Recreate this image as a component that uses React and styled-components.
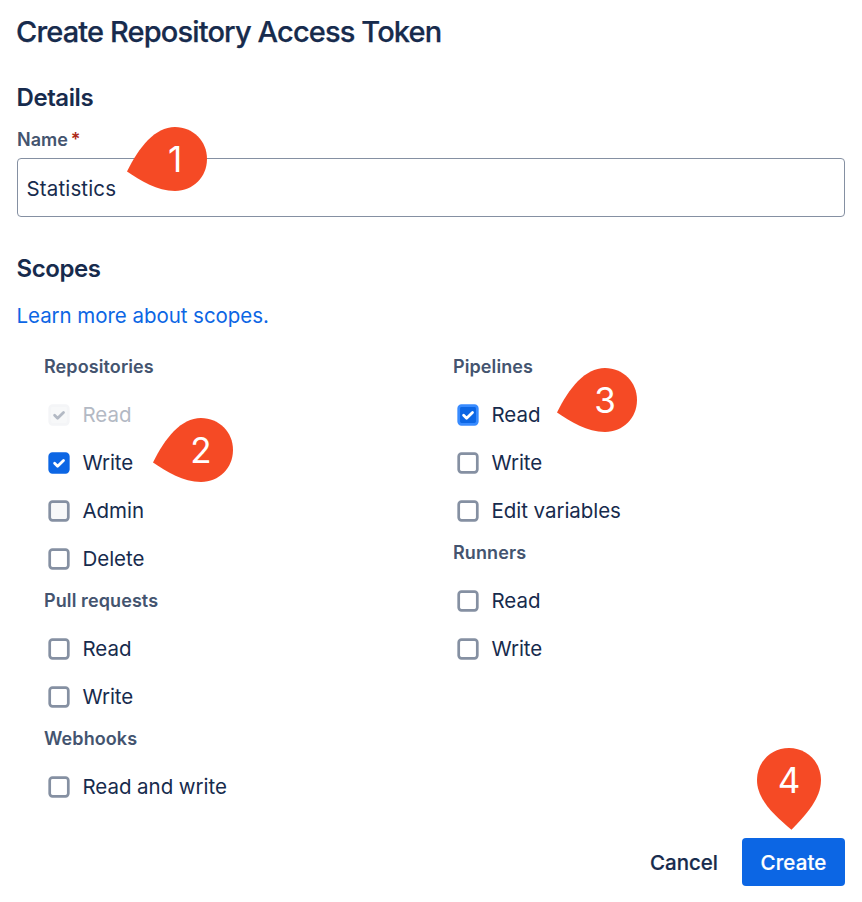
import React from "react";
import styled, { createGlobalStyle, css } from "styled-components";

const GlobalStyle = createGlobalStyle`
  * { box-sizing: border-box; }
  body {
    margin: 0;
    background: #fff;
    color: #172b4d;
    font-family: Inter, "Liberation Sans", sans-serif;
    font-size: 20.5px;
    letter-spacing: -0.05px;
  }
`;

const Page = styled.main`
  position: relative;
  width: 862px;
  height: 902px;
  padding: 14px 17px 16px;
  display: flex;
  flex-direction: column;
  overflow: hidden;
`;

const Title = styled.h1`
  margin: 0 0 0 -1px;
  font-size: 29px;
  line-height: 36px;
  font-weight: 500;
  letter-spacing: -0.86px;
  white-space: nowrap;
  -webkit-text-stroke: 0.25px currentColor;
`;

const SectionTitle = styled.h2`
  margin: ${(p) => p.$top}px 0 0 -0.5px;
  font-size: 24px;
  line-height: 30px;
  font-weight: 600;
  letter-spacing: -0.42px;
`;

const FieldLabel = styled.label`
  margin-top: 15px;
  font-size: 18px;
  line-height: 24px;
  font-weight: 600;
  letter-spacing: 0;
  color: #44546f;
`;

const Required = styled.span`
  margin-left: 3px;
  color: #ae2a19;
`;

const NameInput = styled.input`
  width: 828px;
  height: 59px;
  margin-top: 6px;
  padding: 2px 9px 0 8.5px;
  border: 1px solid #8590a2;
  border-radius: 4px;
  outline: none;
  background: #fff;
  color: #172b4d;
  font: inherit;
  letter-spacing: 0.15px;
`;

const ScopesLink = styled.a`
  align-self: flex-start;
  margin: 18px 0 0 -0.5px;
  line-height: 28px;
  color: #0c66e4;
  text-decoration: none;
`;

const ScopeColumns = styled.div`
  display: grid;
  grid-template-columns: 409px 1fr;
  margin: 19px 0 0 27px;
`;

const GroupTitle = styled.h3`
  margin: 0 0 6px;
  font-size: 18px;
  line-height: 36px;
  font-weight: 600;
  color: #44546f;
  letter-spacing: 0.1px;
`;

const Option = styled.label`
  display: flex;
  align-items: center;
  gap: 12.5px;
  height: 48px;
  padding-left: 4px;
  color: ${(p) => (p.$disabled ? "#b3b9c4" : "#172b4d")};
`;

const OptionText = styled.span`
  padding-bottom: 2px;
`;

const boxColors = {
  empty: css`fill: #fff; stroke: #8590a2;`,
  hover: css`fill: #f7f8f9; stroke: #8590a2;`,
  disabled: css`fill: #f7f8f9; stroke: #f4f5f7;`,
  checked: css`fill: #0c66e4; stroke: #0c66e4;`,
  focused: css`fill: #0c66e4; stroke: #388bff;`,
};

const BoxIcon = styled.svg`
  flex: none;
  width: 22px;
  height: 22px;
  rect { ${(p) => boxColors[p.$state]} stroke-width: 2.7px; }
  path {
    fill: none;
    stroke: ${(p) => (p.$state === "disabled" ? "#b3b9c4" : "#fff")};
    stroke-width: 2.8px;
    stroke-linecap: round;
    stroke-linejoin: round;
  }
`;

const Actions = styled.footer`
  display: flex;
  justify-content: flex-end;
  margin-top: auto;
`;

const Button = styled.button`
  width: ${(p) => (p.$primary ? 103 : 116)}px;
  height: 48px;
  padding: 1px 0 0;
  border: 0;
  border-radius: 4px;
  background: ${(p) => (p.$primary ? "#0c66e4" : "transparent")};
  color: ${(p) => (p.$primary ? "#fff" : "#172b4d")};
  font: inherit;
  font-weight: 500;
  letter-spacing: ${(p) => (p.$primary ? 0.1 : 0)}px;
  -webkit-text-stroke: 0.2px currentColor;
`;

const Pin = styled.div`
  position: absolute;
  left: ${(p) => p.$x}px;
  top: ${(p) => p.$y}px;
  width: ${(p) => (p.$down ? 64 : 80)}px;
  height: ${(p) => (p.$down ? 82 : 64)}px;
  svg { display: block; width: 100%; height: 100%; fill: #f54a25; }
`;

const PinNumber = styled.span`
  position: absolute;
  top: 0;
  right: 0;
  width: 64px;
  text-align: center;
  color: #fff;
  font-size: 35px;
  line-height: 65px;
`;

const CheckBox = ({ state }) => (
  <BoxIcon viewBox="0 0 22 22" $state={state}>
    <rect x="1.7" y="1.7" width="18.6" height="18.6" rx="2.8" />
    {["checked", "focused", "disabled"].includes(state) && (
      <path d="M6.6 11.3 9.6 14.2 15.5 8.5" />
    )}
  </BoxIcon>
);

const Group = ({ title, options }) => (
  <section>
    <GroupTitle>{title}</GroupTitle>
    {options.map(([label, state = "empty"]) => (
      <Option key={label} $disabled={state === "disabled"}>
        <CheckBox state={state} />
        <OptionText>{label}</OptionText>
      </Option>
    ))}
  </section>
);

const Marker = ({ number, x, y, down }) => (
  <Pin $x={x} $y={y} $down={down}>
    {down ? (
      <svg viewBox="0 0 64 82">
        <path d="M32 0C50 0 64 14 64 32C64 50 50 66 34.5 81.7C16 66 0 51 0 32C0 14 14 0 32 0Z" />
      </svg>
    ) : (
      <svg viewBox="0 0 80 64">
        <path d="M0 44.5C12 20 28 0 48 0C66 0 80 14 80 32C80 50 66 64 48 64C30 64 14 54 0 44.5Z" />
      </svg>
    )}
    <PinNumber>{number}</PinNumber>
  </Pin>
);

const columns = [
  [
    { title: "Repositories", options: [["Read", "disabled"], ["Write", "checked"], ["Admin", "hover"], ["Delete"]] },
    { title: "Pull requests", options: [["Read"], ["Write"]] },
    { title: "Webhooks", options: [["Read and write"]] },
  ],
  [
    { title: "Pipelines", options: [["Read", "focused"], ["Write"], ["Edit variables"]] },
    { title: "Runners", options: [["Read"], ["Write"]] },
  ],
];

export default function App() {
  return (
    <Page>
      <GlobalStyle />
      <Title>Create Repository Access Token</Title>
      <SectionTitle $top={33}>Details</SectionTitle>
      <FieldLabel htmlFor="token-name">
        Name<Required>*</Required>
      </FieldLabel>
      <NameInput id="token-name" defaultValue="Statistics" />
      <SectionTitle $top={37}>Scopes</SectionTitle>
      <ScopesLink href="#">Learn more about scopes.</ScopesLink>
      <ScopeColumns>
        {columns.map((groups, i) => (
          <div key={i}>
            {groups.map((g) => (
              <Group key={g.title} {...g} />
            ))}
          </div>
        ))}
      </ScopeColumns>
      <Actions>
        <Button>Cancel</Button>
        <Button $primary>Create</Button>
      </Actions>
      <Marker number={1} x={127} y={127} />
      <Marker number={2} x={153} y={418} />
      <Marker number={3} x={557} y={368} />
      <Marker number={4} x={757} y={748} down />
    </Page>
  );
}
